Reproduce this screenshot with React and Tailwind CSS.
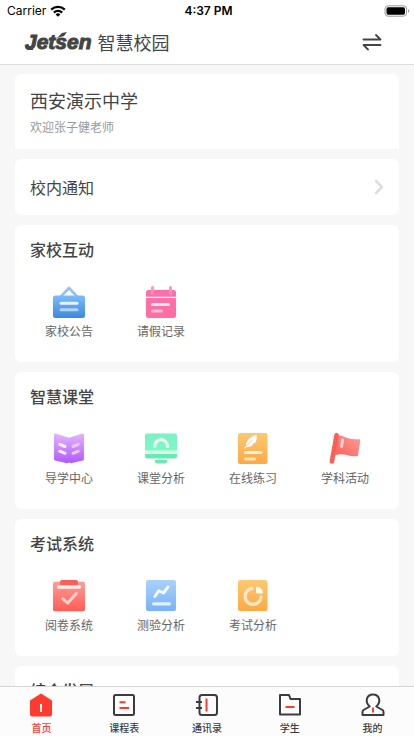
import React, { useState } from 'react';
import { ChevronRight } from 'lucide-react';

const Gradient = ({ id, from, to }) => (
  <linearGradient id={id} x1="0" y1="0" x2="0" y2="1">
    <stop offset="0" stopColor={from} />
    <stop offset="1" stopColor={to} />
  </linearGradient>
);

const TileIcon = ({ children }) => (
  <svg viewBox="0 0 34 34" className="size-[34px]" fill="none" strokeLinecap="round" strokeLinejoin="round" aria-hidden="true">
    {children}
  </svg>
);

const NoticeIcon = () => (
  <TileIcon>
    <defs><Gradient id="notice" from="#7cbcfa" to="#3d87dd" /></defs>
    <path d="M8.5 12 17 3l8.500 9" stroke="#94c2f6" strokeWidth="2.6" />
    <rect x="1" y="10.5" width="32" height="22.5" rx="2.5" fill="url(#notice)" />
    <path d="M9 18.3h16" stroke="#e6f2ff" strokeWidth="3" />
    <path d="M9 24.8h16" stroke="#b3d3f8" strokeWidth="3" />
  </TileIcon>
);

const LeaveIcon = () => (
  <TileIcon>
    <rect x="2" y="5" width="30" height="28" rx="2.5" fill="#ff6fa6" />
    <path d="M2 12.4h30" stroke="#fff" strokeWidth="1.3" strokeLinecap="butt" />
    <path d="M8.4 2.6v5.6M26.4 2.6v5.6" stroke="#ff94bd" strokeWidth="3" />
    <path d="M8.5 19.4h16" stroke="#ffe7f0" strokeWidth="3" />
    <path d="M8.5 26h9" stroke="#ffc0d8" strokeWidth="3" />
  </TileIcon>
);

const GuideIcon = () => (
  <TileIcon>
    <defs><Gradient id="guide" from="#e2b4ff" to="#b258fb" /></defs>
    <path d="M3.5 1.5 17 5.8l13.5-4.3Q32 1.2 32 2.8v24.4q0 1-1 1.3L19 31.3l-2-.8-2 .8-12-2.8q-1-.3-1-1.3V2.8Q2 1.2 3.5 1.5z" fill="url(#guide)" />
    <path d="M7.8 12.3l5.2 2.2M7.8 19.2l5.2 2.1" stroke="#fbf3ff" strokeWidth="3" />
    <path d="M26.2 12.3 21 14.5M26.2 19.2 21 21.3" stroke="#e8cbff" strokeWidth="3" />
  </TileIcon>
);

const BoardIcon = () => (
  <TileIcon>
    <defs><Gradient id="board" from="#7cf0c8" to="#78fcc0" /></defs>
    <path d="M3 1.5h28a2 2 0 0 1 2 2v15.2H1V3.5a2 2 0 0 1 2-2z" fill="url(#board)" />
    <path d="M1 18.7h32V22H1z" fill="#d8faec" />
    <path d="M1 22h32v2.5a2 2 0 0 1-2 2H3a2 2 0 0 1-2-2z" fill="#68eab4" />
    <path d="M11 28h12v1.5a2 2 0 0 1-2 2h-8a2 2 0 0 1-2-2z" fill="#68eab4" />
    <path d="M10.7 14.5a6.4 7 0 0 1 12.8 0" stroke="#f2fff9" strokeWidth="3.2" />
  </TileIcon>
);

const PracticeIcon = () => (
  <TileIcon>
    <defs><Gradient id="practice" from="#fcc970" to="#fda845" /></defs>
    <rect x="2" y="1" width="29.5" height="31" rx="2" fill="url(#practice)" />
    <path d="M20.5 3c.6 3.5 0 6.500-2 8.300l-2.300.3.8 1.100c-1.600 1.500-3.700 2.300-6 2.200l-2.200 1.700-.8-.6 2.200-2.500C10 9 14 4.500 20.500 3z" fill="#fff" />
    <path d="M10.5 14 16 8" stroke="#fdc068" strokeWidth=".8" />
    <path d="M9.5 20.4H25" stroke="#fff3dd" strokeWidth="3" />
    <path d="M9.5 27h9" stroke="#ffe0b0" strokeWidth="3" />
  </TileIcon>
);

const FlagIcon = () => (
  <TileIcon>
    <defs>
      <linearGradient id="flag" x1="0" y1="1" x2="1" y2="0">
        <stop offset="0" stopColor="#fb5f58" />
        <stop offset="1" stopColor="#fb9f9a" />
      </linearGradient>
    </defs>
    <path d="M10 3.6c7-.2 8 4.6 21 3.6q1.4 0 1.3 1.3L30 23.2q-.2 1-1.3 1C20 25 17 20.5 7 23.2z" fill="url(#flag)" />
    <path d="M8.6 3.2 3.9 29.500" stroke="#fb5f58" strokeWidth="4.6" />
    <path d="m14.6 8-1 6.2" stroke="#ffd9d7" strokeWidth="3" />
  </TileIcon>
);

const GradingIcon = () => (
  <TileIcon>
    <defs><Gradient id="grading" from="#ff9c98" to="#ff5d55" /></defs>
    <rect x="1" y="2.7" width="32" height="29.5" rx="2" fill="url(#grading)" />
    <rect x="8" y="1" width="18" height="6" rx="2" fill="#fb5f58" />
    <path d="M6.5 8h21" stroke="#ffeceb" strokeWidth="3.4" />
    <path d="m10.8 19.8 5 4.3 8.5-9.6" stroke="#ffd1ce" strokeWidth="3" />
  </TileIcon>
);

const QuizIcon = () => (
  <TileIcon>
    <defs><Gradient id="quiz" from="#a8d2fd" to="#78b2f8" /></defs>
    <rect x="2" y="1" width="30" height="31" rx="2" fill="url(#quiz)" />
    <path d="m10.8 17.5 3.9-5.600 5 2 4.300-6" stroke="#f5faff" strokeWidth="3" />
    <path d="M9.5 24.8h16" stroke="#e3f0ff" strokeWidth="3.3" />
  </TileIcon>
);

const ExamIcon = () => (
  <TileIcon>
    <defs><Gradient id="exam" from="#fcc970" to="#fda845" /></defs>
    <rect x="2" y="1" width="29.5" height="31" rx="2" fill="url(#exam)" />
    <path d="M16 9.5A8 8 0 1 0 25 18" stroke="#ffe8c6" strokeWidth="3.3" />
    <path d="M20 8.5q0-.8.9-.7A7 7 0 0 1 26.9 13.5q.1.9-.8.9h-5.3q-.8 0-.8-.8z" fill="#fffaf0" />
  </TileIcon>
);

const TabIcon = ({ children }) => (
  <svg viewBox="0 0 24 24" className="size-6" fill="none" stroke="#3c3c3c" strokeWidth="2" strokeLinejoin="round" aria-hidden="true">
    {children}
  </svg>
);

const HomeTab = () => (
  <TabIcon>
    <path d="M12 1.5 22 8v13.5q0 1-1 1H3q-1 0-1-1V8z" fill="#ff3b30" stroke="#ff3b30" />
    <path d="M12 11v8" stroke="#fff" />
  </TabIcon>
);

const ScheduleTab = () => (
  <TabIcon>
    <rect x="2" y="2" width="20" height="20" rx="1.5" />
    <path d="M7.5 9.3h6M7.5 15H17" stroke="#ff3b30" />
  </TabIcon>
);

const ContactsTab = () => (
  <TabIcon>
    <rect x="4.5" y="2" width="17.5" height="20" rx="2.5" />
    <path d="M1 9h6M1 15h6" />
    <path d="M11.5 5.5v13" stroke="#ff3b30" />
  </TabIcon>
);

const StudentTab = () => (
  <TabIcon>
    <path d="M2 2h9l1.500 4H22v15.500H2z" />
    <path d="M7.5 14h9" stroke="#ff3b30" />
  </TabIcon>
);

const ProfileTab = () => (
  <TabIcon>
    <path d="M8.7 13.5C3.5 9 5.5 1.5 12 1.5s8.500 7.500 3.300 12L21.500 17q1 .8 1 2v3h-21v-3q0-1.200 1-2z" />
    <path d="M12 14.5v5" stroke="#ff3b30" />
  </TabIcon>
);

const SECTIONS = [
  {
    title: '家校互动',
    items: [
      { label: '家校公告', Icon: NoticeIcon },
      { label: '请假记录', Icon: LeaveIcon },
    ],
  },
  {
    title: '智慧课堂',
    items: [
      { label: '导学中心', Icon: GuideIcon },
      { label: '课堂分析', Icon: BoardIcon },
      { label: '在线练习', Icon: PracticeIcon },
      { label: '学科活动', Icon: FlagIcon },
    ],
  },
  {
    title: '考试系统',
    items: [
      { label: '阅卷系统', Icon: GradingIcon },
      { label: '测验分析', Icon: QuizIcon },
      { label: '考试分析', Icon: ExamIcon },
    ],
  },
  { title: '综合发展', items: [] },
];

const TABS = [
  { label: '首页', Icon: HomeTab },
  { label: '课程表', Icon: ScheduleTab },
  { label: '通讯录', Icon: ContactsTab },
  { label: '学生', Icon: StudentTab },
  { label: '我的', Icon: ProfileTab },
];

const StatusBar = () => (
  <div className="grid h-[21px] grid-cols-3 items-center pr-1 pl-[7px] font-[Inter,sans-serif] text-xs text-black">
    <div className="flex items-center gap-1">
      <span>Carrier</span>
      <svg viewBox="0 0 16 12" className="h-3 w-4" fill="none" stroke="#000" strokeWidth="2.2" aria-label="Wi-Fi">
        <path d="M1.200 4.600a9.800 9.800 0 0 1 13.600 0M3.900 7.600a5.900 5.900 0 0 1 8.200 0" />
        <path d="M8 11.800 5.600 9.400a3.400 3.400 0 0 1 4.800 0z" fill="#000" stroke="none" />
      </svg>
    </div>
    <span className="text-center font-semibold">4:37 PM</span>
    <svg viewBox="0 0 26 12" className="h-3 w-[26px] justify-self-end" aria-label="Battery">
      <rect x="1" y=".8" width="21.5" height="10.4" rx="3" fill="none" stroke="#999" />
      <rect x="2.5" y="2.3" width="18.5" height="7.4" rx="1.6" fill="#000" />
      <path d="M24 4.3v3.4q1.3-.4 1.3-1.7T24 4.3z" fill="#999" />
    </svg>
  </div>
);

const Section = ({ title, items }) => (
  <section className="rounded-md bg-white px-2 pt-3 pb-[23px]">
    <h2 className="pl-[7px] text-base leading-6 font-medium text-[#444]">{title}</h2>
    <div className="mt-6 grid grid-cols-4">
      {items.map(({ label, Icon }) => (
        <button key={label} type="button" className="flex flex-col items-center gap-1 text-xs leading-4 text-[#666]">
          <Icon />
          {label}
        </button>
      ))}
    </div>
  </section>
);

const App = () => {
  const [activeTab, setActiveTab] = useState('首页');

  return (
    <div className="flex h-screen flex-col bg-[#f7f7f7] font-['Noto_Sans_CJK_SC',sans-serif] text-[#444]">
      {/* Header */}
      <header className="border-b border-[#dcdcdc] bg-white">
        <StatusBar />
        <div className="flex h-[43px] items-center justify-between pr-8 pb-0.5 pl-[25px]">
          <h1 className="flex items-center gap-1.5 text-lg">
            <span className="relative font-['Liberation_Sans',sans-serif] text-[21px] leading-5 font-bold italic text-[#444] [-webkit-text-stroke:1px_#444]">
              Jetsen
              <svg viewBox="0 0 12 6" className="absolute top-0 left-8 h-1.5 w-3" aria-hidden="true">
                <path d="M0 6 5 1l5-1-3 4z" fill="#444" />
              </svg>
              <svg viewBox="0 0 8 6" className="absolute bottom-0.5 left-0 h-1.5 w-2" aria-hidden="true">
                <path d="M0 2q3 2 8-1v5H3Q0 5.500 0 2z" fill="#444" />
              </svg>
            </span>
            <span>智慧校园</span>
          </h1>
          <button type="button" aria-label="切换">
            <svg viewBox="0 0 20 18" className="h-[18px] w-5" fill="none" stroke="#444" strokeWidth="1.8" strokeLinecap="round" strokeLinejoin="round">
              <path d="M1.5 6.5h17L14 2M18.5 12h-17L6 16.500" />
            </svg>
          </button>
        </div>
      </header>

      {/* Content */}
      <main className="flex min-h-0 flex-1 flex-col gap-2.5 overflow-y-auto px-[15px] pt-[9px] [scrollbar-width:none] *:shrink-0">
        <div className="rounded-t-md bg-white px-[15px] pt-3 pb-3.5">
          <h2 className="text-lg leading-7">西安演示中学</h2>
          <p className="mt-1 text-xs leading-[17px] text-[#999]">欢迎张子健老师</p>
        </div>

        <button type="button" className="flex h-14 items-center justify-between rounded-md bg-white pr-2 pl-[15px] text-base">
          校内通知
          <ChevronRight size={24} strokeWidth={2.5} className="text-[#ddd]" />
        </button>

        {SECTIONS.map((section) => (
          <Section key={section.title} {...section} />
        ))}
      </main>

      {/* Tab bar */}
      <nav className="grid h-[50px] grid-cols-5 border-t border-[#d4d4d4] bg-[#fcfcfc]">
        {TABS.map(({ label, Icon }) => (
          <button
            key={label}
            type="button"
            onClick={() => setActiveTab(label)}
            className={`flex flex-col items-center gap-1 pt-1.5 text-[10px] leading-[14px] font-medium ${activeTab === label ? 'text-[#ff3b30]' : 'text-[#3c3c3c]'}`}
          >
            <Icon />
            {label}
          </button>
        ))}
      </nav>
    </div>
  );
};

export default App;
